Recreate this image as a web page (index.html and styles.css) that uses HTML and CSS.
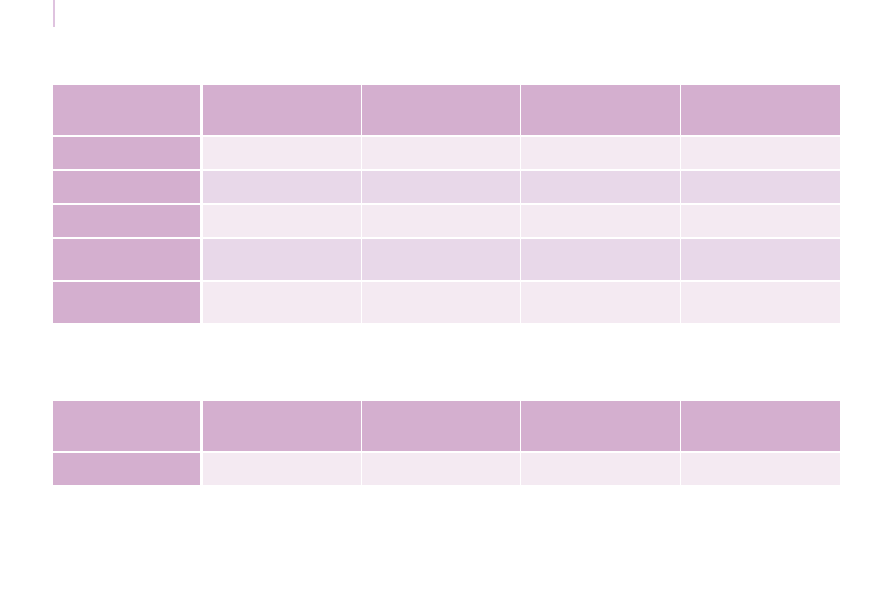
FILE: index.html
```html
<!DOCTYPE html>
<html lang="en">
<head>
<meta charset="utf-8">
<title>Tables</title>
<link rel="stylesheet" href="styles.css">
</head>
<body>
<div class="page">
  <div class="top-rule"></div>

  <div class="table table-one">
    <div class="row head">
      <div class="cell lead"></div><div class="cell"></div><div class="cell"></div><div class="cell"></div><div class="cell"></div>
    </div>
    <div class="row body odd">
      <div class="cell lead"></div><div class="cell"></div><div class="cell"></div><div class="cell"></div><div class="cell"></div>
    </div>
    <div class="row body even">
      <div class="cell lead"></div><div class="cell"></div><div class="cell"></div><div class="cell"></div><div class="cell"></div>
    </div>
    <div class="row body odd">
      <div class="cell lead"></div><div class="cell"></div><div class="cell"></div><div class="cell"></div><div class="cell"></div>
    </div>
    <div class="row body even tall">
      <div class="cell lead"></div><div class="cell"></div><div class="cell"></div><div class="cell"></div><div class="cell"></div>
    </div>
    <div class="row body odd tall">
      <div class="cell lead"></div><div class="cell"></div><div class="cell"></div><div class="cell"></div><div class="cell"></div>
    </div>
  </div>

  <div class="table table-two">
    <div class="row head">
      <div class="cell lead"></div><div class="cell"></div><div class="cell"></div><div class="cell"></div><div class="cell"></div>
    </div>
    <div class="row body odd">
      <div class="cell lead"></div><div class="cell"></div><div class="cell"></div><div class="cell"></div><div class="cell"></div>
    </div>
  </div>
</div>
</body>
</html>
```

FILE: styles.css
```css
html, body {
  margin: 0;
  padding: 0;
  background: #ffffff;
  font-family: "Liberation Sans", Arial, sans-serif;
}

.page {
  width: 893px;
  height: 595px;
  padding-left: 53px;
  box-sizing: border-box;
}

.top-rule {
  width: 2px;
  height: 27px;
  background: #dfc3df;
}

.table {
  width: 787px;
  display: flex;
  flex-direction: column;
  gap: 2px;
}

.table-one {
  margin-top: 58px;
}

.table-two {
  margin-top: 78px;
}

.row {
  display: grid;
  grid-template-columns: 149px 158px 158px 159px 159px;
  column-gap: 1px;
  height: 32px;
}

.row.head {
  height: 50px;
}

.row.tall {
  height: 41px;
}

.cell.lead {
  margin-right: 2px;
  background: #d4afcf;
}

.row.head .cell {
  background: #d4afcf;
}

.row.odd .cell {
  background: #f4eaf2;
}

.row.even .cell {
  background: #e8d8e9;
}

.row.body .cell.lead {
  background: #d4afcf;
}
```
